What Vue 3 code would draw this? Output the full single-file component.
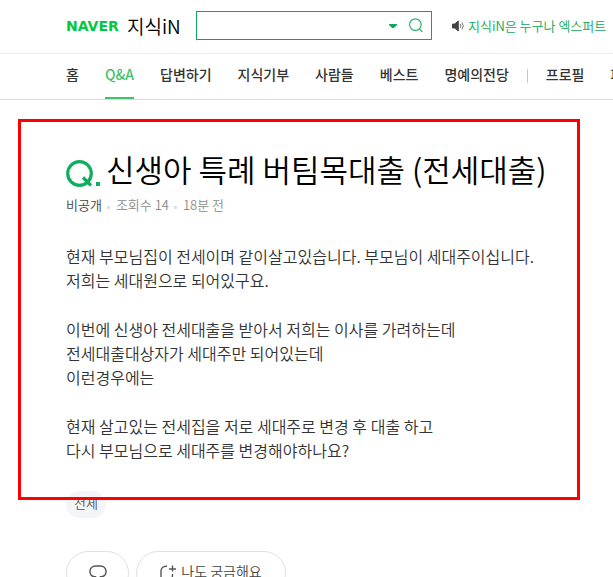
<script setup>
import { ref } from 'vue'

const query = ref('')
const menu = ['홈', 'Q&A', '답변하기', '지식기부', '사람들', '베스트', '명예의전당']
const personal = ['프로필', '파트너']
const paragraphs = [
  ['현재 부모님집이 전세이며 같이살고있습니다. 부모님이 세대주이십니다.', '저희는 세대원으로 되어있구요.'],
  ['이번에 신생아 전세대출을 받아서 저희는 이사를 가려하는데', '전세대출대상자가 세대주만 되어있는데', '이런경우에는'],
  ['현재 살고있는 전세집을 저로 세대주로 변경 후 대출 하고', '다시 부모님으로 세대주를 변경해야하나요?'],
]
</script>

<template>
  <div class="page">
    <header class="top">
      <a class="brand" href="#">NAVER</a>
      <a class="service" href="#">지식iN</a>
      <form class="search" role="search" @submit.prevent>
        <input v-model="query" class="field" type="text" aria-label="검색어" />
        <button class="toggle" type="button" aria-label="자동완성 펼치기">
          <svg width="8" height="4" viewBox="0 0 8 4"><path d="M0 0h8v1L4.8 4H3.2L0 1z" fill="#0aa858" /></svg>
        </button>
        <button class="submit" type="submit" aria-label="검색">
          <svg width="14" height="15" viewBox="0 0 14 15" fill="none" stroke="#2db56f" stroke-width="1.2">
            <circle cx="6.4" cy="6.6" r="5.8" /><path d="M10.4 10.8l3 3.2" />
          </svg>
        </button>
      </form>
      <a class="notice" href="#">
        <svg width="12" height="12" viewBox="0 0 12 12" fill="none" stroke="#777">
          <path d="M.5 4h2.2L6.3 1v10L2.7 8H.5z" fill="#444" stroke="#444" />
          <path d="M8.2 4q1.4 2 0 4M10 2.5q2.6 3.5 0 7" />
        </svg>
        <span>지식iN은 누구나 엑스퍼트</span>
      </a>
    </header>

    <nav class="nav">
      <a v-for="item in menu" :key="item" href="#" :class="{ active: item === 'Q&A' }">{{ item }}</a>
      <span class="divider"></span>
      <a v-for="item in personal" :key="item" href="#">{{ item }}</a>
    </nav>

    <main>
      <article class="question">
        <h1 class="title">
          <svg class="q" width="35" height="38" viewBox="0 -10 35 38" role="img" aria-label="질문">
            <circle cx="13.5" cy="13.5" r="11.8" fill="none" stroke="#0fad5c" stroke-width="3.2" />
            <path d="M17 17.5l8 8" stroke="#0fad5c" stroke-width="3.2" />
            <rect x="30" y="22" width="4" height="4" fill="#0fad5c" />
          </svg>
          <span>신생아 특례 버팀목대출 (전세대출)</span>
        </h1>
        <div class="meta">
          <span class="author">비공개</span><i class="dot"></i><span>조회수 14</span><i class="dot"></i><span>18분 전</span>
        </div>
        <div class="content">
          <p v-for="(lines, i) in paragraphs" :key="i">
            <template v-for="(line, j) in lines" :key="j"><br v-if="j" />{{ line }}</template>
          </p>
        </div>
      </article>

      <div class="tags"><a class="tag" href="#">전세</a></div>

      <div class="actions">
        <button class="pill" type="button" aria-label="댓글">
          <svg width="18" height="20" viewBox="0 -4 18 20" fill="none" stroke="#555" stroke-width="1.5">
            <path d="M6.500 1h5a5.500 5.500 0 0 1 1.500 10.800H11.500L9 14.500l-2.500-2.700H5A5.500 5.500 0 0 1 6.500 1z" />
          </svg>
        </button>
        <button class="pill wide" type="button">
          <svg width="16" height="20" viewBox="0 -4 16 20" fill="none" stroke="#555" stroke-width="1.4">
            <path d="M7 1.200H6A5 5 0 0 0 1 6V15h7a4.500 4.500 0 0 0 4.500-4.500V9M9 4h7M12.500 .5v6" />
          </svg>
          <span>나도 궁금해요</span>
        </button>
      </div>
    </main>
  </div>
</template>

<style>
body {
  margin: 0;
  background: #fff;
}
</style>

<style scoped>
.page {
  height: 100vh;
  overflow: hidden;
  font-family: "Noto Sans CJK KR", sans-serif;
  color: #333;
}
a {
  color: inherit;
  text-decoration: none;
}
button {
  padding: 0;
  border: 0;
  background: none;
  font: inherit;
  color: inherit;
}
svg {
  display: block;
  flex: none;
}
.top {
  display: flex;
  align-items: center;
  box-sizing: border-box;
  height: 54px;
  padding: 0 0 2px 66px;
  border-bottom: 1px solid #eee;
  white-space: nowrap;
}
.brand {
  width: 61px;
  font: 700 14px/20px "DejaVu Sans", sans-serif;
  color: #03c73c;
}
.service {
  width: 69px;
  font-size: 19px;
  line-height: 24px;
  font-weight: 350;
  color: #000;
}
.search {
  display: flex;
  flex: none;
  align-items: center;
  box-sizing: border-box;
  width: 236px;
  height: 29px;
  padding-right: 8px;
  border: 1px solid #0aa858;
}
.field {
  flex: 1;
  min-width: 0;
  height: 20px;
  border: 0;
  outline: 0;
  background: none;
}
.toggle {
  margin-right: 12px;
}
.notice {
  display: flex;
  align-items: center;
  gap: 4px;
  margin-left: 20px;
  font-size: 13px;
  line-height: 20px;
  font-weight: 350;
  color: #0aa858;
}
.nav {
  display: flex;
  gap: 26px;
  height: 45px;
  padding-left: 66px;
  border-bottom: 1px solid #d9d9d9;
  font-size: 14px;
  line-height: 40px;
  font-weight: 500;
  white-space: nowrap;
}
.nav a {
  flex: none;
}
.nav .active {
  color: #45bf6b;
  border-bottom: 2px solid #45bf6b;
  box-sizing: border-box;
}
.divider {
  flex: none;
  width: 1px;
  height: 14px;
  margin: 15px -8px 0;
  background: #c9c9ae;
}
.question {
  position: relative;
  z-index: 1;
  margin: 19px 33px 0 18px;
  padding: 26px 0 35px 45px;
  border: 3px solid #f00;
}
.title {
  display: flex;
  align-items: center;
  gap: 5px;
  margin: 0;
  font-size: 31px;
  line-height: 42px;
  font-weight: 350;
  color: #000;
  white-space: nowrap;
}
.meta {
  display: flex;
  align-items: center;
  margin-top: 3px;
  font-size: 13px;
  line-height: 24px;
  font-weight: 350;
  color: #8c8c8c;
}
.author {
  color: #444;
}
.dot {
  width: 3px;
  height: 3px;
  margin: 4px 6px 0 5px;
  border-radius: 1px;
  background: #ddd;
}
.content {
  margin-top: 27px;
  font-size: 16px;
  line-height: 24px;
  font-weight: 350;
  white-space: nowrap;
}
.content p {
  margin: 0 0 25px;
}
.content p:last-child {
  margin: 0;
}
.tags {
  display: flex;
  margin-top: -9px;
  padding-left: 66px;
}
.tag {
  padding: 0 8px 4px;
  border-radius: 14px;
  background: #f3f5f8;
  font-size: 13px;
  line-height: 23px;
  font-weight: 350;
  color: #555;
}
.actions {
  display: flex;
  gap: 7px;
  margin-top: 33px;
  padding-left: 66px;
}
.pill {
  display: flex;
  align-items: center;
  justify-content: center;
  gap: 5px;
  box-sizing: border-box;
  width: 63px;
  height: 44px;
  padding-bottom: 4px;
  border: 1px solid #e0e0e0;
  border-radius: 22px;
  font-size: 14px;
  font-weight: 350;
  color: #444;
}
.wide {
  width: 150px;
}
</style>
